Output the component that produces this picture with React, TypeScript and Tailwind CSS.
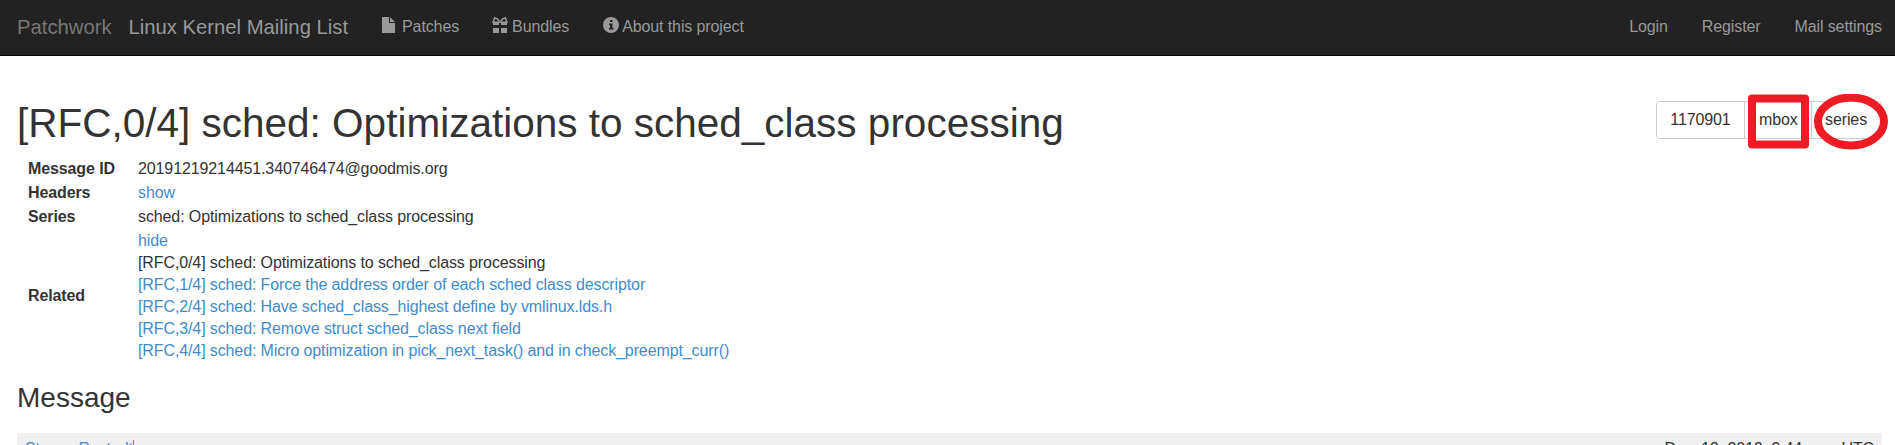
import React from "react";

const related = [
  "[RFC,1/4] sched: Force the address order of each sched class descriptor",
  "[RFC,2/4] sched: Have sched_class_highest define by vmlinux.lds.h",
  "[RFC,3/4] sched: Remove struct sched_class next field",
  "[RFC,4/4] sched: Micro optimization in pick_next_task() and in check_preempt_curr()",
];

function FileIcon() {
  return (
    <svg className="h-4 w-[13px]" viewBox="0 0 13 16" fill="currentColor">
      <path d="M0 0h7v6h6v10H0z" />
      <path d="M8 0l5 5H8z" />
    </svg>
  );
}

function GiftIcon() {
  return (
    <svg className="h-4 w-4" viewBox="0 0 16 16" fill="currentColor">
      <path d="M1 5h6v3H1zM9 5h6v3H9zM1 11h6v5H1zM9 11h6v5H9z" />
      <path d="M0 4.500h16v1.500H0z" />
      <path d="M7.500 4.500L5 1.700 2.500 1 1.500 4.500M8.500 4.500L11 1.700l2.500-.7 1 3.500" fill="none" stroke="currentColor" strokeWidth="1.500" />
    </svg>
  );
}

function InfoIcon() {
  return (
    <svg className="h-4 w-4" viewBox="0 0 16 16" fill="currentColor">
      <path fillRule="evenodd" d="M8 0a8 8 0 1 0 0 16A8 8 0 0 0 8 0zM7 3h2.500v2H7zM6 6.500h3.500V11h1v1.500H6V11h1V8H6z" />
    </svg>
  );
}

function Row({ label, children }: { label: string; children: React.ReactNode }) {
  return (
    <tr>
      <th className="w-[110px] py-px pr-0 text-left align-middle font-bold">{label}</th>
      <td className="py-px">{children}</td>
    </tr>
  );
}

export default function App() {
  return (
    <div className="h-[445px] overflow-hidden bg-white font-['Liberation_Sans',Arial,sans-serif] text-[16px] leading-[22px] tracking-[-0.11px] text-[#333]">
      <nav className="flex h-14 items-center whitespace-nowrap border-b border-[#080808] bg-[#222] pb-px pl-[17px] pr-[13px] text-[#999]">
        <span className="text-[20.25px] tracking-normal text-[#777]">Patchwork</span>
        <span className="ml-[17px] text-[20.25px] tracking-normal">Linux Kernel Mailing List</span>
        <span className="ml-[34px] flex items-center"><span className="-mt-1"><FileIcon /></span><span className="ml-[7px]">Patches</span></span>
        <span className="ml-[33px] flex items-center"><span className="-mt-1"><GiftIcon /></span><span className="ml-[4px]">Bundles</span></span>
        <span className="ml-[34px] flex items-center"><span className="-mt-1"><InfoIcon /></span><span className="ml-[3px]">About this project</span></span>
        <span className="ml-auto">Login</span>
        <span className="ml-[34px]">Register</span>
        <span className="ml-[34px]">Mail settings</span>
      </nav>
      <main className="pl-[17px] pr-[13px]">
        <header className="flex h-[101px] items-start justify-between">
          <h1 className="mt-[45px] whitespace-nowrap text-[40.5px] leading-[44px] tracking-normal">[RFC,0/4] sched: Optimizations to sched_class processing</h1>
          <div className="relative mt-[45px] flex h-[38px] w-[226px] rounded-[4px] border border-[#ccc] leading-[36px]">
            <span className="w-[88px] border-r border-[#ccc] text-center">1170901</span>
            <span className="w-[67px] border-r border-[#ccc] pl-[14px]">mbox</span>
            <span className="pl-[13px]">series</span>
            <svg className="absolute -left-px -top-[8px] h-[58px] w-[234px]" viewBox="0 0 234 58" fill="none" stroke="#ed1c24" strokeWidth="8">
              <rect x="96" y="4.500" width="53" height="46" strokeLinejoin="round" />
              <ellipse cx="195" cy="27.500" rx="33" ry="24" />
            </svg>
          </div>
        </header>
        <table className="ml-[11px] border-collapse">
          <tbody>
            <Row label="Message ID">20191219214451.340746474@goodmis.org</Row>
            <Row label="Headers"><a className="text-[#428bca]">show</a></Row>
            <Row label="Series">sched: Optimizations to sched_class processing</Row>
            <Row label="Related">
              <a className="text-[#428bca]">hide</a>
              <ul>
                <li>[RFC,0/4] sched: Optimizations to sched_class processing</li>
                {related.map((r) => (
                  <li key={r}><a className="text-[#428bca]">{r}</a></li>
                ))}
              </ul>
            </Row>
          </tbody>
        </table>
        <h2 className="mt-[20px] text-[28px] leading-[29px] tracking-normal">Message</h2>
        <div className="mt-[21px] flex h-8 justify-between bg-[#f0f0f0] px-2 pt-[5px]">
          <span className="flex text-[#428bca]">Steven Rostedt<span className="mt-[2px] h-4 w-px bg-[#428bca]" /></span>
          <span>Dec. 19, 2019, 9:44 p.m. UTC</span>
        </div>
      </main>
    </div>
  );
}
